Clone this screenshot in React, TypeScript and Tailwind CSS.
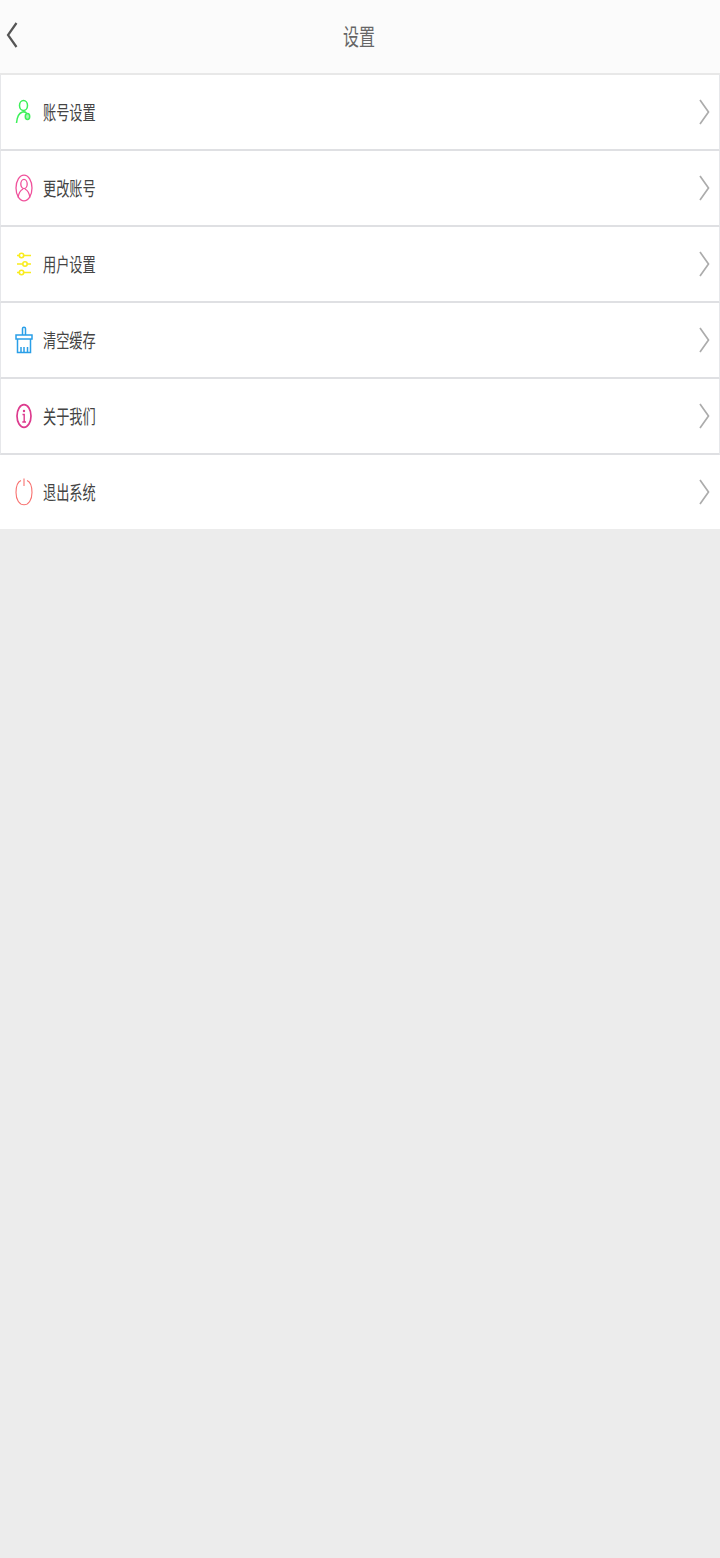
const Chevron = () => (
  <svg width="12" height="26" viewBox="0 0 12 26" fill="none" stroke="#acacac" strokeWidth="1.7" className="shrink-0">
    <path d="M2 1 L10.5 13 L2 25" />
  </svg>
);

const AccountIcon = () => (
  <svg width="18" height="26" viewBox="0 0 18 26" fill="none" stroke="#3df05a" strokeWidth="1.5">
    <ellipse cx="8.5" cy="6.5" rx="4" ry="5" />
    <path d="M1.5 24 C2 18 4 14 7.5 13 C9 12.7 10.5 13 11.5 14" />
    <ellipse cx="12.5" cy="17.5" rx="2.2" ry="3" fill="#a8f5b4" />
  </svg>
);

const ChangeIcon = () => (
  <svg width="18" height="28" viewBox="0 0 18 28" fill="none" stroke="#f0529c" strokeWidth="1.3">
    <ellipse cx="9" cy="14" rx="8" ry="12.8" />
    <ellipse cx="9" cy="10" rx="3.2" ry="4.6" />
    <path d="M3.2 23.5 C3.6 19 6 16 8 15 M14.8 23.5 C14.4 19 12 16 10 15" />
  </svg>
);

const SlidersIcon = () => (
  <svg width="16" height="24" viewBox="0 0 16 24" fill="none" stroke="#f9ec1e" strokeWidth="1.6">
    <path d="M1 3.5 H3 M8 3.5 H15 M1 12 H6.5 M11.5 12 H15 M1 20.5 H3 M8 20.5 H15" />
    <circle cx="5.5" cy="3.5" r="2.2" />
    <circle cx="9" cy="12" r="2.2" />
    <circle cx="5.5" cy="20.5" r="2.2" />
  </svg>
);

const BrushIcon = () => (
  <svg width="18" height="28" viewBox="0 0 18 28" fill="none" stroke="#2a9fe8" strokeWidth="1.5">
    <path d="M7.5 9 V2.5 C7.5 0.8 10.5 0.8 10.5 2.5 V9" />
    <path d="M1 9 H17 V13 H1 Z" />
    <path d="M2.5 13 V26.5 H15.5 V13" />
    <path d="M6 26 V21 M9 26 V21 M12.5 26 V21" />
  </svg>
);

const InfoIcon = () => (
  <svg width="18" height="26" viewBox="0 0 18 26" fill="none" stroke="#dd3b8e" strokeWidth="1.7">
    <ellipse cx="9" cy="13" rx="7" ry="11.3" />
    <circle cx="9" cy="8" r="1.2" fill="#dd3b8e" stroke="none" />
    <path d="M7.5 11.5 H9.2 V19 M7.3 19 H11" strokeWidth="1.4" />
  </svg>
);

const PowerIcon = () => (
  <svg width="18" height="28" viewBox="0 0 18 28" fill="none" stroke="#f8716f" strokeWidth="1.1">
    <path d="M6 2.4 C3 3.6 1 8 1 14.5 C1 22 4.5 26.8 9 26.8 C13.5 26.8 17 22 17 14.5 C17 8 15 3.6 12 2.4" />
    <path d="M9 0.5 V8" />
  </svg>
);

const rows = [
  { label: '账号设置', icon: <AccountIcon /> },
  { label: '更改账号', icon: <ChangeIcon /> },
  { label: '用户设置', icon: <SlidersIcon /> },
  { label: '清空缓存', icon: <BrushIcon /> },
  { label: '关于我们', icon: <InfoIcon /> },
];

function Row({ label, icon }: { label: string; icon: React.ReactNode }) {
  return (
    <div className="flex h-[76px] items-center border-x border-b-2 border-x-[#e6e7ea] border-b-[#dfe0e3] bg-white pl-[14px] pr-[9px]">
      <div className="flex w-[18px] justify-center">{icon}</div>
      <span className="mt-[2px] ml-[10px] flex-1 origin-center scale-y-[1.45] text-[13.2px] leading-none text-[#444444]">{label}</span>
      <Chevron />
    </div>
  );
}

export default function App() {
  return (
    <div className="flex min-h-[1558px] w-[720px] flex-col bg-[#ececec]">
      <div className="[font-family:'Noto_Sans_CJK_SC','Liberation_Sans',sans-serif]">
        {/* Header */}
        <div className="relative flex h-[75px] items-center justify-center border-b-2 border-[#e8e8e8] bg-[#fbfbfb]">
          <svg width="12" height="26" viewBox="0 0 12 26" fill="none" stroke="#555555" strokeWidth="2.2" className="absolute left-[6px] top-[22px]">
            <path d="M10.5 1 L2 13 L10.5 25" />
          </svg>
          <span className="mr-[2px] mb-[3px] scale-y-[1.45] text-[16px] leading-none text-[#666666]">设置</span>
        </div>

        {rows.map(r => (
          <Row key={r.label} label={r.label} icon={r.icon} />
        ))}

        {/* last row has no border */}
        <div className="flex h-[74px] items-center bg-white pl-[15px] pr-[10px]">
          <div className="flex w-[18px] justify-center"><PowerIcon /></div>
          <span className="mt-[2px] ml-[10px] flex-1 scale-y-[1.45] text-[13.2px] leading-none text-[#444444]">退出系统</span>
          <Chevron />
        </div>
      </div>
    </div>
  );
}
